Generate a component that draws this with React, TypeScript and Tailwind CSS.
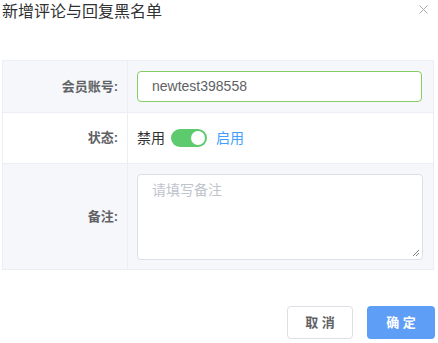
import React from "react";

export default function App() {
  const font = { fontFamily: '"Helvetica Neue", "Liberation Sans", "Noto Sans CJK SC", sans-serif' };
  return (
    <div className="w-[438px] h-[343px] bg-white relative overflow-hidden" style={font}>
      <div className="flex items-center justify-between h-[24px] pl-[2px] pr-[10px]">
        <div className="text-[16px] leading-[24px] text-[#303133]">新增评论与回复黑名单</div>
        <svg width="9" height="9" viewBox="0 0 9 9" className="mt-[-6px]">
          <path d="M0.5 0.5L8.5 8.5M8.5 0.5L0.5 8.5" stroke="#a8abb2" strokeWidth="1" />
        </svg>
      </div>
      <div className="ml-[2px] mt-[36px] w-[432px] border border-[#ebeef5]">
        <div className="flex h-[52px] bg-[#f5f7fa] border-b border-[#ebeef5]">
          <div className="w-[125px] border-r border-[#ebeef5] flex items-center justify-end pr-[9px] text-[13px] font-bold text-[#606266]">会员账号:</div>
          <div className="flex-1 flex items-center pl-[9px]">
            <div className="w-[285px] h-[31px] rounded-[4px] border border-[#88cc66] bg-white flex items-center pl-[14px] text-[14px] text-[#606266]">newtest398558</div>
          </div>
        </div>
        <div className="flex h-[51px] bg-white border-b border-[#ebeef5]">
          <div className="w-[125px] border-r border-[#ebeef5] flex items-center justify-end pr-[9px] text-[13px] font-bold text-[#606266]">状态:</div>
          <div className="flex-1 flex items-center pl-[9px] text-[14px]">
            <span className="text-[#303133]">禁用</span>
            <div className="ml-[6px] w-[36px] h-[18px] rounded-full bg-[#5dca6e] relative">
              <div className="absolute right-[2px] top-[2px] w-[14px] h-[14px] rounded-full bg-white" />
            </div>
            <span className="ml-[9px] text-[#409eff]">启用</span>
          </div>
        </div>
        <div className="flex h-[105px] bg-[#f5f7fa]">
          <div className="w-[125px] border-r border-[#ebeef5] flex items-center justify-end pr-[9px] text-[13px] font-bold text-[#606266]">备注:</div>
          <div className="flex-1 flex items-center pl-[9px]">
            <div className="w-[286px] h-[86px] rounded-[4px] border border-[#dcdfe6] bg-white relative pl-[14px] pt-[5px] text-[14px] text-[#c0c4cc]">
              请填写备注
              <svg width="8" height="8" viewBox="0 0 8 8" className="absolute right-[2px] bottom-[2px]">
                <path d="M7 1L1 7M7 4L4 7" stroke="#606266" strokeWidth="0.8" />
              </svg>
            </div>
          </div>
        </div>
      </div>
      <div className="flex justify-end gap-[14px] pr-[3px] mt-[36px]">
        <button className="w-[66px] h-[33px] rounded-[4px] border border-[#dcdfe6] bg-white text-[13px] font-bold text-[#606266]">取 消</button>
        <button className="w-[68px] h-[33px] rounded-[4px] bg-[#5e9ef6] text-[13px] font-bold text-white">确 定</button>
      </div>
    </div>
  );
}
